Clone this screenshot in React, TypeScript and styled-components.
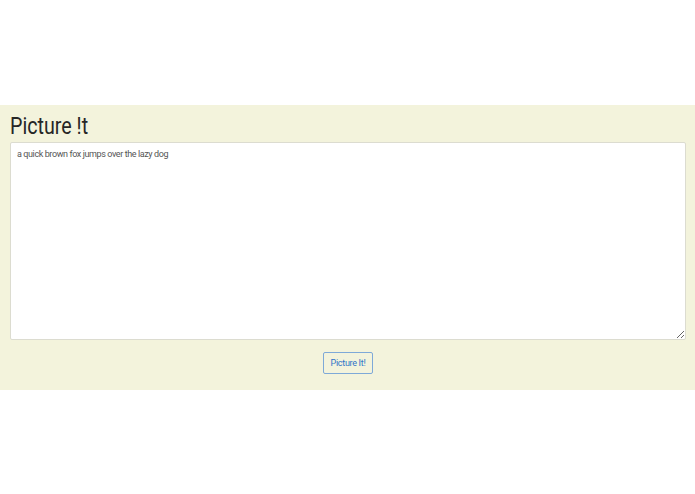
import React from "react";
import styled, { createGlobalStyle } from "styled-components";

const GlobalStyle = createGlobalStyle`
  body {
    margin: 0;
    background: #ffffff;
    font-family: "Roboto", "Liberation Sans", sans-serif;
  }
`;

const Page = styled.div`
  width: 695px;
  height: 494px;
  padding-top: 105px;
  box-sizing: border-box;
`;

const Section = styled.section`
  background: #f3f3dc;
  padding: 7px 9px 16px 10px;
  display: flex;
  flex-direction: column;
`;

const Title = styled.h1`
  margin: 0 0 1px;
  font-size: 24px;
  font-weight: 400;
  color: #262626;
  line-height: 29px;
  align-self: flex-start;
  transform: scaleX(0.82);
  transform-origin: left center;
`;

const Input = styled.textarea`
  box-sizing: border-box;
  width: 100%;
  height: 198px;
  border: 1px solid #dcdcd0;
  border-radius: 2px;
  background: #ffffff;
  padding: 6px 6px;
  font-family: "Roboto", sans-serif;
  font-size: 9px;
  letter-spacing: -0.4px;
  color: #555555;
  resize: vertical;
  outline: none;
`;

const Actions = styled.div`
  display: flex;
  justify-content: center;
  margin-top: 12px;
`;

const Button = styled.button`
  background: transparent;
  border: 1px solid #7ea9d8;
  border-radius: 2px;
  color: #2f74c8;
  font-family: "Roboto", sans-serif;
  font-size: 9px;
  font-weight: 400;
  letter-spacing: -0.3px;
  height: 22px;
  padding: 0 7px;
  cursor: pointer;
`;

export default function App() {
  return (
    <Page>
      <GlobalStyle />
      <Section>
        <Title>Picture !t</Title>
        <Input defaultValue="a quick brown fox jumps over the lazy dog" />
        <Actions>
          <Button>Picture It!</Button>
        </Actions>
      </Section>
    </Page>
  );
}
